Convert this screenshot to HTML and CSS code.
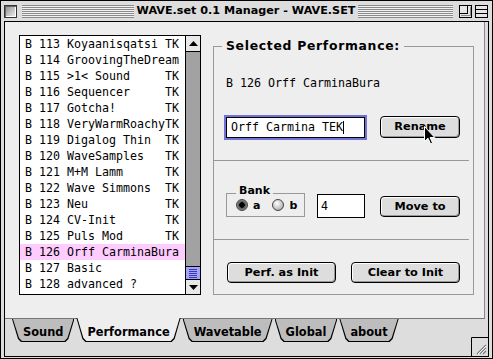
FILE: index.html
```html
<!DOCTYPE html>
<html lang="en">
<head>
  <meta charset="UTF-8">
  <title>WAVE.set 0.1 Manager - WAVE.SET</title>
  <link rel="stylesheet" href="styles.css">
</head>
<body>

<div class="window">
  <div class="titlebar">
    <div class="tb-side">
      <span class="close-box"></span>
      <span class="stripes left"></span>
    </div>
    <span class="title">WAVE.set 0.1 Manager - WAVE.SET</span>
    <div class="tb-side">
      <span class="stripes right"></span>
      <svg class="wbox" width="13" height="13" viewBox="0 0 13 13">
        <rect x="0.5" y="0.5" width="12" height="12" fill="#e6e6e6" stroke="#000"/>
        <rect x="0.5" y="0.5" width="8" height="8" fill="none" stroke="#000"/>
        <path d="M2 10.5H11.5V2" stroke="#888" fill="none"/>
      </svg>
      <svg class="wbox" width="13" height="13" viewBox="0 0 13 13">
        <rect x="0.5" y="0.5" width="12" height="12" fill="#e6e6e6" stroke="#000"/>
        <path d="M1 4.5H12M1 8.5H12" stroke="#000"/>
      </svg>
    </div>
  </div>

  <div class="content">
    <div class="panel">
      <div class="listbox">
        <ul class="rows">
          <li>B 113 Koyaanisqatsi TK</li>
          <li>B 114 GroovingTheDream</li>
          <li>B 115 &gt;1&lt; Sound     TK</li>
          <li>B 116 Sequencer     TK</li>
          <li>B 117 Gotcha!       TK</li>
          <li>B 118 VeryWarmRoachyTK</li>
          <li>B 119 Digalog Thin  TK</li>
          <li>B 120 WaveSamples   TK</li>
          <li>B 121 M+M Lamm      TK</li>
          <li>B 122 Wave Simmons  TK</li>
          <li>B 123 Neu           TK</li>
          <li>B 124 CV-Init       TK</li>
          <li>B 125 Puls Mod      TK</li>
          <li class="selected">B 126 Orff CarminaBura</li>
          <li>B 127 Basic</li>
          <li>B 128 advanced ?</li>
        </ul>
        <div class="scrollbar">
          <div class="arrow up"><svg width="9" height="5" viewBox="0 0 9 5"><path d="M4.5 0L9 5H0Z"/></svg></div>
          <div class="track"></div>
          <div class="thumb"><span></span><span></span><span></span><span></span><span></span></div>
          <div class="arrow down"><svg width="9" height="5" viewBox="0 0 9 5"><path d="M0 0H9L4.5 5Z"/></svg></div>
        </div>
      </div>

      <div class="group">
        <span class="group-title">Selected Performance:</span>
        <div class="perf-name">B 126 Orff CarminaBura</div>

        <div class="row rename-row">
          <div class="field focused">Orff Carmina TEK<span class="caret"></span></div>
          <div class="btn rename">Rename</div>
        </div>

        <div class="sep sep1"></div>

        <div class="row bank-row">
          <div class="bank">
            <span class="bank-title">Bank</span>
            <span class="radio on"></span><span class="radio-label">a</span>
            <span class="radio b"></span><span class="radio-label">b</span>
          </div>
          <div class="field num">4</div>
          <div class="btn moveto">Move to</div>
        </div>

        <div class="sep sep2"></div>

        <div class="row init-row">
          <div class="btn wide">Perf. as Init</div>
          <div class="btn wide clear">Clear to Init</div>
        </div>
      </div>
    </div>

    <div class="tabstrip">
      <div class="tab">Sound</div>
      <div class="tab active">Performance</div>
      <div class="tab">Wavetable</div>
      <div class="tab">Global</div>
      <div class="tab">about</div>
      <svg class="grow" width="17" height="19" viewBox="0 0 17 19">
        <path d="M0.5 19V0.5H17" stroke="#000" fill="none"/>
        <path d="M6 17L15 8M9 17L15 11M12 17L15 14" stroke="#777" stroke-width="1.2"/>
        <path d="M7 17L15 9M10 17L15 12" stroke="#fff" stroke-width="0.8"/>
      </svg>
    </div>
  </div>

  <svg class="cursor" width="12" height="19" viewBox="0 0 12 19">
    <path d="M0.5 0.5V15.5L4 12.2L6.6 18L8.6 17.1L6.1 11.5H10.8Z" fill="#000" stroke="#fff" stroke-width="1"/>
  </svg>
</div>

</body>
</html>
```

FILE: styles.css
```css
body { margin: 0; background: #fff; }

.window { position: relative; width: 493px; height: 359px; box-sizing: border-box; border: 1px solid #000; background: #dddddd; display: flex; flex-direction: column; font-family: "DejaVu Sans", sans-serif; color: #000; }

/* title bar */
.titlebar { height: 20px; display: grid; grid-template-columns: 1fr auto 1fr; align-items: center; padding: 0 4px 0 3px; }
.tb-side { display: flex; align-items: center; }
.close-box { width: 13px; height: 13px; box-sizing: border-box; border: 1px solid #333; background: linear-gradient(135deg, #8a8a8a, #f4f4f4); box-shadow: inset 1px 1px 0 #666, inset -1px -1px 0 #fff; }
.stripes { flex: 1; height: 13px; background: repeating-linear-gradient(to bottom, #8a8a8a 0 1px, #f2f2f2 1px 2px); }
.stripes.left { margin-left: 5px; }
.stripes.right { margin-right: 3px; }
.wbox { display: block; margin-left: 3px; }
.title { padding: 0 3px; font-weight: bold; font-size: 11.2px; line-height: 20px; white-space: nowrap; }

/* window body */
.content { flex: 1; margin: 0 3px 1px 3px; border: 1px solid #000; display: flex; flex-direction: column; background: #dddddd; }
.panel { height: 297px; box-sizing: border-box; margin-right: 3px; padding: 13px 0 0 14px; background: #eeeeee; border-right: 1px solid #888; border-bottom: 1px solid #777; display: flex; align-items: flex-start; }

/* list */
.listbox { width: 182px; height: 260px; box-sizing: border-box; border: 1px solid #000; background: #fff; display: flex; }
.rows { width: 165px; margin: 0; padding: 0; list-style: none; font-family: "DejaVu Sans Mono", monospace; font-size: 11.63px; }
.rows li { height: 16px; line-height: 16px; padding-left: 5px; white-space: pre; }
.rows li.selected { background: #ffccff; }

.scrollbar { width: 15px; box-sizing: border-box; border-left: 1px solid #000; display: flex; flex-direction: column; }
.arrow { height: 15px; display: flex; align-items: center; justify-content: center; background: #e8e8e8; }
.arrow svg { display: block; }
.arrow.up { border-bottom: 1px solid #000; }
.arrow.down { border-top: 1px solid #000; height: 14px; }
.track { flex: 1; background: #a2a2a2; }
.thumb { height: 12px; border-top: 1px solid #000; background: #a3a3ff; display: flex; flex-direction: column; align-items: center; justify-content: center; gap: 1px; }
.thumb span { width: 8px; height: 1px; background: #3a3ab0; }

/* selected performance group */
.group { position: relative; width: 261px; height: 249px; box-sizing: border-box; margin: 11px 0 0 12px; border: 1px solid #999; }
.group-title { position: absolute; top: -9px; left: 8px; padding: 0 4px; background: #eeeeee; font-weight: bold; font-size: 12.4px; letter-spacing: 0.7px; line-height: 16px; white-space: nowrap; }
.perf-name { margin: 28px 0 0 12px; font-family: "DejaVu Sans Mono", monospace; font-size: 11.63px; line-height: 16px; white-space: pre; }

.row { display: flex; align-items: flex-start; }
.field { box-sizing: border-box; border: 1px solid #000; background: #fff; font-family: "DejaVu Sans Mono", monospace; font-size: 11.63px; white-space: pre; }
.field.focused { margin-left: 12px; width: 139px; height: 21px; line-height: 19px; padding-left: 4px; box-shadow: 0 0 0 2px #7272d6; display: flex; align-items: center; }
.caret { width: 1px; height: 13px; background: #000; }

.btn { box-sizing: border-box; border: 1px solid #000; border-radius: 4px; background: #dddddd; box-shadow: inset 1px 1px 0 #fff, inset -1px -1px 0 #999; font-weight: bold; font-size: 11.3px; text-align: center; white-space: nowrap; }

.rename-row { margin-top: 26px; }
.btn.rename { margin: -1px 0 0 15px; width: 80px; height: 22px; line-height: 20px; }

.sep { height: 1px; background: #999; margin-right: 4px; }
.sep1 { margin-top: 22px; }
.sep2 { margin-top: 21px; }

.bank-row { margin-top: 32px; }
.bank { position: relative; margin-left: 12px; width: 79px; height: 24px; box-sizing: border-box; border: 1px solid #999; display: flex; align-items: center; padding-left: 9px; }
.bank-title { position: absolute; top: -10px; left: 9px; padding: 0 3px; background: #eeeeee; font-weight: bold; font-size: 11px; line-height: 13px; }
.radio { width: 12px; height: 12px; box-sizing: border-box; border-radius: 50%; border: 1px solid #444; background: radial-gradient(circle at 40% 35%, #fff 0, #c8c8c8 55%, #8a8a8a 100%); }
.radio.on { background: radial-gradient(circle, #000 0 2.5px, #555 3px, #8a8a8a 5px, #bbb 6px); }
.radio.b { margin-left: 12px; }
.radio-label { margin-left: 5px; font-weight: bold; font-size: 11px; }
.field.num { margin: 1px 0 0 12px; width: 48px; height: 24px; line-height: 22px; padding-left: 3px; }
.btn.moveto { margin: 3px 0 0 15px; width: 80px; height: 21px; line-height: 19px; }

.init-row { margin-top: 22px; }
.btn.wide { margin-left: 13px; width: 109px; height: 21px; line-height: 19px; }
.btn.wide.clear { margin-left: 15px; }

/* tabs */
.tabstrip { flex: 1; display: flex; align-items: flex-start; padding-left: 7px; }
.tab { position: relative; z-index: 0; height: 23px; padding: 0 11px; margin-right: 2px; font-weight: bold; font-size: 11.4px; line-height: 26px; white-space: nowrap; }
.tab::before, .tab::after { content: ""; position: absolute; z-index: -1; clip-path: polygon(0 0, 100% 0, calc(100% - 6px) calc(100% - 3px), calc(100% - 9px) 100%, 9px 100%, 6px calc(100% - 3px)); }
.tab::before { inset: 0; background: #000; }
.tab::after { inset: 0 1px 1px 1px; background: #bdbdbd; }
.tab.active { margin-top: -1px; height: 24px; line-height: 28px; }
.tab.active::after { background: #eeeeee; }
.grow { margin-left: auto; align-self: flex-end; display: block; }

.cursor { position: absolute; left: 423px; top: 125px; }
```
